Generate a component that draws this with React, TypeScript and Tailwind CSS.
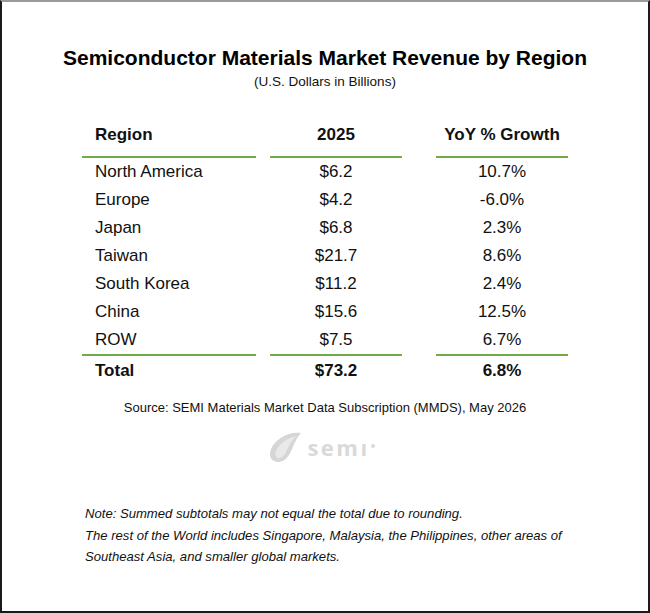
import React from 'react';

type Row = { region: string; value: string; growth: string };

const rows: Row[] = [
  { region: 'North America', value: '$6.2', growth: '10.7%' },
  { region: 'Europe', value: '$4.2', growth: '-6.0%' },
  { region: 'Japan', value: '$6.8', growth: '2.3%' },
  { region: 'Taiwan', value: '$21.7', growth: '8.6%' },
  { region: 'South Korea', value: '$11.2', growth: '2.4%' },
  { region: 'China', value: '$15.6', growth: '12.5%' },
  { region: 'ROW', value: '$7.5', growth: '6.7%' },
];

function TableRow({ row, bold, className }: { row: Row; bold?: boolean; className?: string }) {
  const cell = bold ? 'font-bold' : '';
  return (
    <div className={`flex h-[28px] items-center text-[17px] ${cell} ${className ?? ''}`}>
      <div className="w-[174px] pl-[13px]">{row.region}</div>
      <div className="ml-[14px] w-[132px] text-center">{row.value}</div>
      <div className="ml-[34px] w-[132px] text-center">{row.growth}</div>
    </div>
  );
}

function GreenRule() {
  return (
    <div className="flex h-[2px]">
      <div className="w-[174px] bg-[#70ad47]" />
      <div className="ml-[14px] w-[132px] bg-[#70ad47]" />
      <div className="ml-[34px] w-[132px] bg-[#70ad47]" />
    </div>
  );
}

function SemiLogo() {
  return (
    <div className="flex h-[32px] items-center text-[#d9d9d9]">
      <svg width="34" height="32" viewBox="0 0 34 32" className="mr-[4px]">
        {/* swoosh */}
        <path
          d="M32 2 C20 0 6 8 2 18 C-1 26 3 31 9 31 C16 31 20 25 23 18 C26 11 28 6 32 2 Z"
          fill="#d6d6d6"
        />
        <path
          d="M27 5 C18 7 10 13 7 20 C5 25 8 28 11 27 C15 26 17 21 19 17 C21 12 24 8 27 5 Z"
          fill="#e9e9e9"
        />
      </svg>
      <span
        className="text-[22px] font-bold leading-none tracking-[2.5px]"
        style={{ fontFamily: '"Open Sans", "Liberation Sans", sans-serif' }}
      >
        semı
      </span>
      <span className="ml-[1px] mb-[2px] h-[4px] w-[4px] rounded-full bg-[#d9d9d9]" />
    </div>
  );
}

export default function App() {
  return (
    <div
      className="flex h-[613px] w-[650px] flex-col items-center border-2 border-[#1a1a1a] border-t-[#9a9a9a] bg-white text-[#111]"
      style={{ fontFamily: '"Liberation Sans", Arial, sans-serif' }}
    >
      <h1 className="mt-[44px] text-[21px] font-bold leading-[24px] text-black">
        Semiconductor Materials Market Revenue by Region
      </h1>
      <p className="mt-[4px] text-[13.5px] leading-[16px]">(U.S. Dollars in Billions)</p>

      <div className="mt-[24px] w-[486px]">
        <div className="flex h-[42px] items-center text-[17px] font-bold">
          <div className="w-[174px] pl-[13px]">Region</div>
          <div className="ml-[14px] w-[132px] text-center">2025</div>
          <div className="ml-[34px] w-[132px] text-center">YoY % Growth</div>
        </div>
        <GreenRule />
        {rows.map((r) => (
          <TableRow key={r.region} row={r} />
        ))}
        <GreenRule />
        <TableRow row={{ region: 'Total', value: '$73.2', growth: '6.8%' }} bold className="mt-[1px]" />
      </div>

      <p className="mt-[15px] text-[13px] leading-[16px]">
        Source: SEMI Materials Market Data Subscription (MMDS), May 2026
      </p>

      <div className="mt-[15px] mr-[6px]">
        <SemiLogo />
      </div>

      <div className="mt-[40px] self-stretch pl-[83px] text-[13.1px] italic leading-[21.5px]">
        <p>Note: Summed subtotals may not equal the total due to rounding.</p>
        <p>The rest of the World includes Singapore, Malaysia, the Philippines, other areas of</p>
        <p>Southeast Asia, and smaller global markets.</p>
      </div>
    </div>
  );
}
